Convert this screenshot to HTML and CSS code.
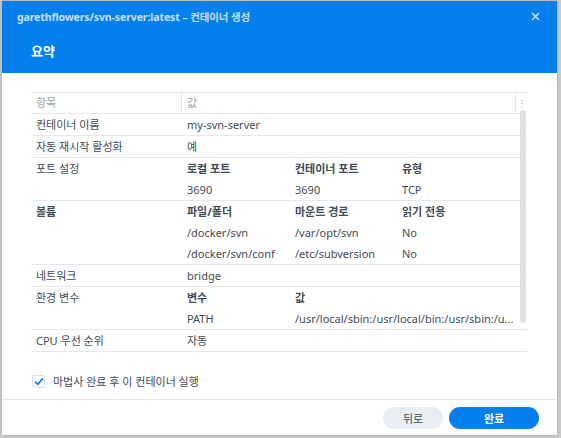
FILE: index.html
```html
<!DOCTYPE html>
<html lang="ko">
<head>
<meta charset="utf-8">
<link rel="stylesheet" href="styles.css">
</head>
<body>
<div class="dialog">
  <div class="header">
    <div class="titlebar">
      <span class="title">garethflowers/svn-server:latest – 컨테이너 생성</span>
      <svg class="close" width="9" height="9" viewBox="0 0 9 9"><path d="M1 1L8 8M8 1L1 8" stroke="#d6e8fb" stroke-width="1.4" fill="none"/></svg>
    </div>
    <div class="step">요약</div>
  </div>
  <div class="content">
    <div class="table">
      <div class="thead">
        <div class="th">항목</div>
        <div class="th th-val">값</div>
        <div class="th th-menu">⋮</div>
      </div>
      <div class="tbody">
        <div class="row"><div class="label">컨테이너 이름</div><div class="val">my-svn-server</div></div>
        <div class="row"><div class="label">자동 재시작 활성화</div><div class="val">예</div></div>
        <div class="row"><div class="label">포트 설정</div>
          <div class="val sub">
            <div class="b">로컬 포트</div><div class="b">컨테이너 포트</div><div class="b">유형</div>
            <div>3690</div><div>3690</div><div>TCP</div>
          </div>
        </div>
        <div class="row"><div class="label b">볼륨</div>
          <div class="val sub">
            <div class="b">파일/폴더</div><div class="b">마운트 경로</div><div class="b">읽기 전용</div>
            <div>/docker/svn</div><div>/var/opt/svn</div><div>No</div>
            <div>/docker/svn/conf</div><div>/etc/subversion</div><div>No</div>
          </div>
        </div>
        <div class="row"><div class="label">네트워크</div><div class="val">bridge</div></div>
        <div class="row"><div class="label">환경 변수</div>
          <div class="val sub env">
            <div class="b">변수</div><div class="b">값</div>
            <div>PATH</div><div class="clip">/usr/local/sbin:/usr/local/bin:/usr/sbin:/u...</div>
          </div>
        </div>
        <div class="row"><div class="label">CPU 우선 순위</div><div class="val">자동</div></div>
        <div class="scrollbar"></div>
      </div>
    </div>
    <label class="check">
      <span class="box"><svg width="10" height="9" viewBox="0 0 10 9"><path d="M1 4.6L3.8 7.3L9 1.3" stroke="#057feb" stroke-width="1.8" fill="none"/></svg></span>
      <span>마법사 완료 후 이 컨테이너 실행</span>
    </label>
  </div>
  <div class="footer">
    <button class="btn btn-back">뒤로</button>
    <button class="btn btn-done">완료</button>
  </div>
</div>
</body>
</html>
```

FILE: styles.css
```css
* { box-sizing: border-box; }
html, body { margin: 0; height: 100%; }
body {
  background: #c9c9c9;
  padding: 1px 4px 3px 2px;
  font-family: "Noto Sans", "Noto Sans CJK KR", sans-serif;
  font-size: 11px;
  color: #414b55;
}
.dialog {
  background: #fff;
  height: 434px;
  display: flex;
  flex-direction: column;
  box-shadow: 0 0 2px rgba(0,0,0,0.25);
}
.header {
  background: #057feb;
  height: 72px;
  padding: 7px 17px 0 15px;
}
.titlebar {
  display: flex;
  align-items: center;
  justify-content: space-between;
  height: 17px;
}
.title {
  color: #c6e0fa;
  font-weight: 700;
  font-size: 10.5px;
  letter-spacing: -0.1px;
}
.step {
  color: #fff;
  font-weight: 700;
  font-size: 13px;
  margin-top: 16px;
  padding-left: 14px;
}
.content {
  flex: 1;
  padding: 19px 30px 0 29px;
}
.table { width: 496px; }
.thead {
  display: grid;
  grid-template-columns: 150px 334px 12px;
  border-top: 1px solid #e3e8ee;
  border-bottom: 1px solid #e3e8ee;
  height: 22px;
}
.th {
  color: #9aa3ab;
  line-height: 20px;
  padding-left: 5px;
}
.th-val { border-left: 1px solid #e3e8ee; padding-left: 5px; }
.th-menu { border-left: 1px solid #e3e8ee; padding-left: 0; text-align: center; color: #b0b7bd; font-size: 10px; }
.tbody { position: relative; }
.row {
  display: grid;
  grid-template-columns: 150px 1fr;
  border-bottom: 1px solid #e3e8ee;
}
.label, .val > div, .val {
  line-height: 21px;
}
.label { padding-left: 5px; }
.val { padding-left: 6px; }
.sub {
  display: grid;
  grid-template-columns: 108px 107px 1fr;
}
.sub.env { grid-template-columns: 108px 1fr; }
.clip { white-space: nowrap; overflow: hidden; }
.b { font-weight: 700; }
.scrollbar {
  position: absolute;
  right: 1px;
  top: -4px;
  width: 6px;
  height: 213px;
  background: #e0e0e0;
  border-radius: 3px;
}
.check {
  display: flex;
  align-items: center;
  gap: 8px;
  margin-top: 21px;
  margin-left: 1px;
  font-size: 11px;
}
.box {
  width: 13px;
  height: 13px;
  border: 1px solid #d6dde5;
  border-radius: 2px;
  display: flex;
  align-items: center;
  justify-content: center;
}
.footer {
  border-top: 1px solid #e3e8ee;
  height: 36px;
  display: flex;
  justify-content: flex-end;
  align-items: center;
  gap: 6px;
  padding-right: 18px;
}
.btn {
  font-family: "Noto Sans", "Noto Sans CJK KR", sans-serif;
  font-size: 11px;
  border: none;
  border-radius: 11px;
  height: 22px;
  padding: 0;
}
.btn-back { width: 60px; background: #e8edf4; color: #414b55; }
.btn-done { width: 90px; background: #057feb; color: #fff; font-weight: 700; }
```
